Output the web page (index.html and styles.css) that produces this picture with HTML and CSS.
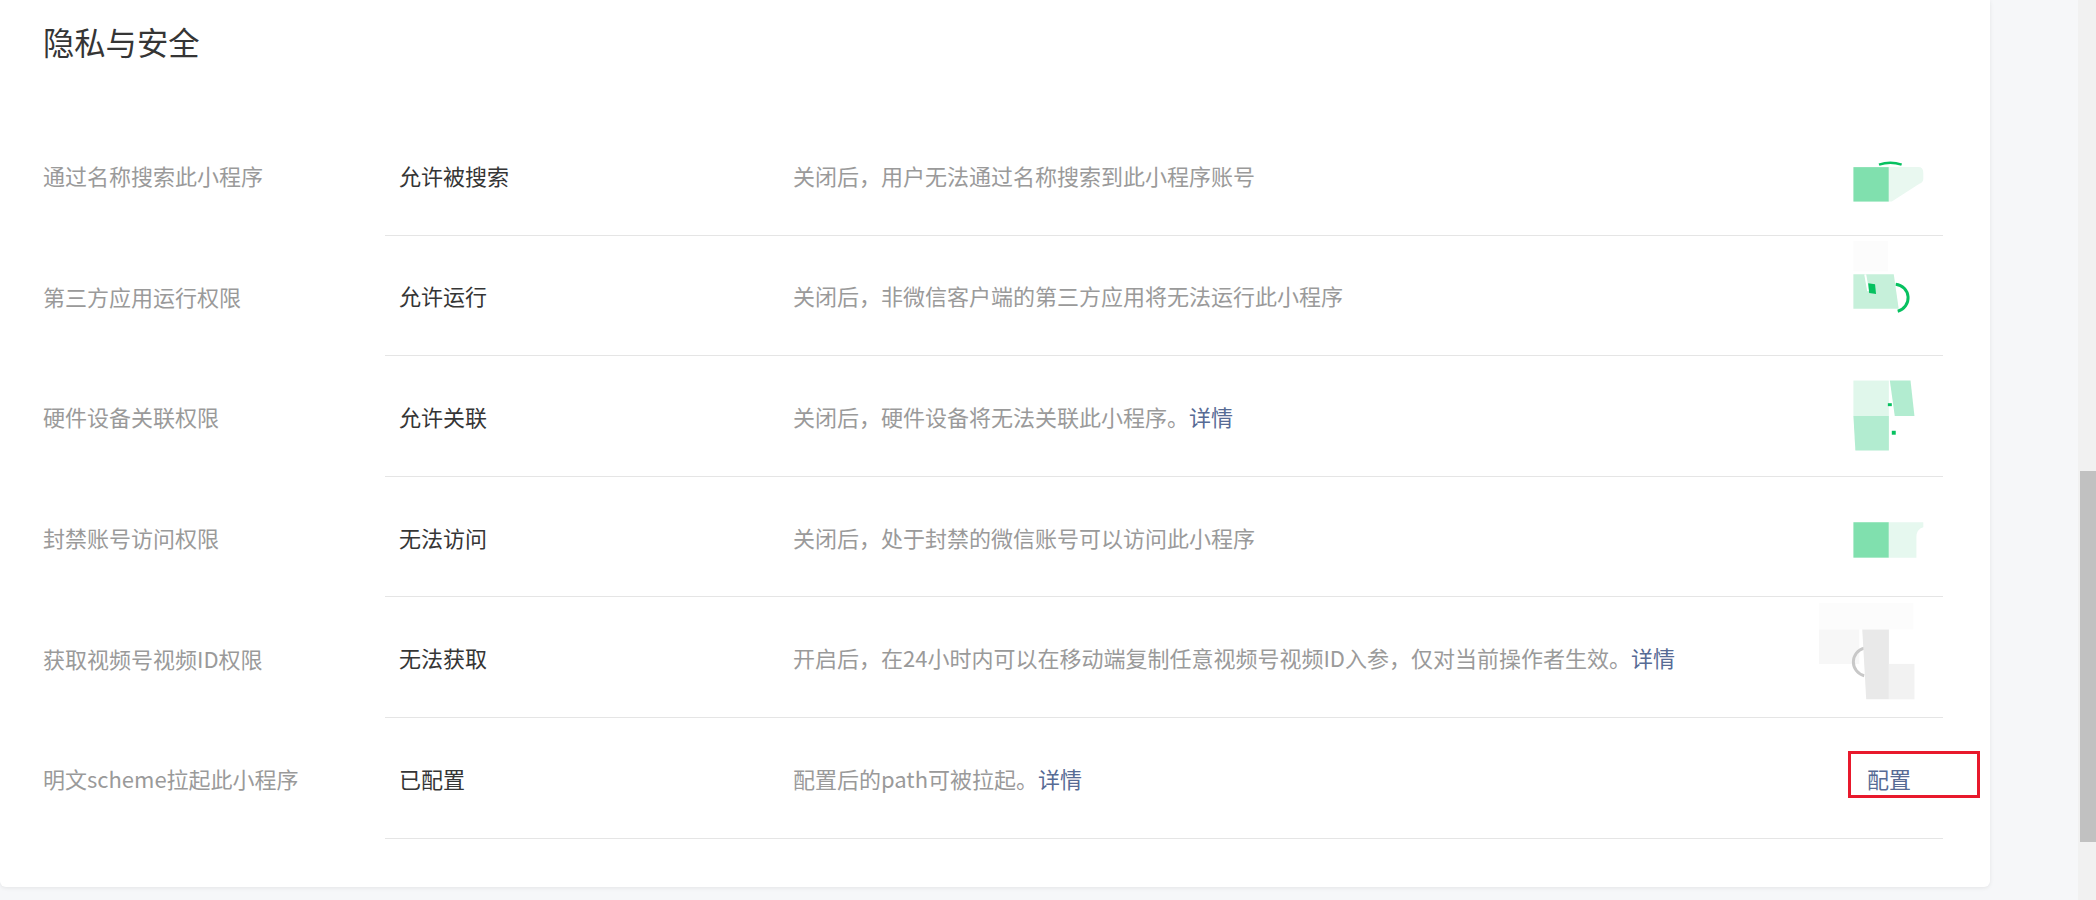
FILE: index.html
```html
<!DOCTYPE html>
<html lang="zh-CN">
  <head>
    <meta charset="UTF-8" />
    <meta name="viewport" content="width=device-width, initial-scale=1.0" />
    <title>隐私与安全</title>
    <link rel="stylesheet" href="styles.css">
  </head>
  <body>
    <div class="page">
      <div class="main">
        <div class="card">
          <h2 class="card-title">隐私与安全</h2>

          <div class="setting-list">
            <div class="row">
              <div class="row-label">通过名称搜索此小程序</div>
              <div class="row-body">
                <div class="row-value">允许被搜索</div>
                <div class="row-desc">关闭后，用户无法通过名称搜索到此小程序账号</div>
                <div class="row-action">
                  <svg class="switch" viewBox="0 0 130 110" width="130" height="110">
                    <path d="M65 44.5 Q76.5 40.5 88 44.5" fill="none" stroke="#07c160" stroke-width="2.5" />
                    <rect x="39" y="47" width="36" height="35" fill="#80e0ae" />
                    <path d="M75 47 L105 47 Q110 47 110 53 L110 59 Q110 62 106 64 L78 82 L75 82 Z" fill="#e9f8f0" />
                  </svg>
                </div>
              </div>
            </div>

            <div class="row">
              <div class="row-label">第三方应用运行权限</div>
              <div class="row-body">
                <div class="row-value">允许运行</div>
                <div class="row-desc">关闭后，非微信客户端的第三方应用将无法运行此小程序</div>
                <div class="row-action">
                  <svg class="switch" viewBox="0 0 130 110" width="130" height="110">
                    <rect x="39" y="0" width="35" height="31" fill="#fcfcfc" />
                    <polygon points="39,34 80,34 85,69 39,69" fill="#c6f0da" />
                    <line x1="51" y1="34" x2="54" y2="51" stroke="#fff" stroke-width="2" />
                    <polygon points="54,43 61,44 62,54 55,53" fill="#07c160" />
                    <path d="M82 44 A14 14 0 0 1 84 71.5" fill="none" stroke="#07c160" stroke-width="3" />
                  </svg>
                </div>
              </div>
            </div>

            <div class="row">
              <div class="row-label">硬件设备关联权限</div>
              <div class="row-body">
                <div class="row-value">允许关联</div>
                <div class="row-desc">关闭后，硬件设备将无法关联此小程序。<a class="link" href="#">详情</a></div>
                <div class="row-action">
                  <svg class="switch" viewBox="0 0 130 110" width="130" height="110">
                    <rect x="39" y="19" width="36" height="36" fill="#e0f7eb" />
                    <polygon points="76,19 97,19 101,55 81,55" fill="#b2ecd0" />
                    <rect x="74" y="42" width="4" height="3" fill="#07c160" />
                    <polygon points="39,55 75,55 75,90 41,90" fill="#b2ecd0" />
                    <rect x="78" y="70" width="4" height="4" fill="#07c160" />
                  </svg>
                </div>
              </div>
            </div>

            <div class="row">
              <div class="row-label">封禁账号访问权限</div>
              <div class="row-body">
                <div class="row-value">无法访问</div>
                <div class="row-desc">关闭后，处于封禁的微信账号可以访问此小程序</div>
                <div class="row-action">
                  <svg class="switch" viewBox="0 0 130 110" width="130" height="110">
                    <rect x="39" y="40" width="36" height="36" fill="#80e0ae" />
                    <path d="M75 40 H110 V45 Q103 47 103 55 V76 H75 Z" fill="#e6f8ef" />
                  </svg>
                </div>
              </div>
            </div>

            <div class="row">
              <div class="row-label">获取视频号视频ID权限</div>
              <div class="row-body">
                <div class="row-value">无法获取</div>
                <div class="row-desc">开启后，在24小时内可以在移动端复制任意视频号视频ID入参，仅对当前操作者生效。<a class="link" href="#">详情</a></div>
                <div class="row-action">
                  <svg class="switch" viewBox="0 0 130 110" width="130" height="110">
                    <rect x="4" y="0" width="96" height="27" fill="#fcfcfc" />
                    <rect x="4" y="27" width="41" height="35" fill="#f7f7f7" />
                    <path d="M50 46 A14.4 14.4 0 0 0 50 74" fill="none" stroke="#c8c8c8" stroke-width="3" />
                    <polygon points="48,27 75,27 75,98 52,98" fill="#e9e9e9" />
                    <rect x="75" y="62" width="26" height="36" fill="#f2f2f2" />
                  </svg>
                </div>
              </div>
            </div>

            <div class="row">
              <div class="row-label">明文scheme拉起此小程序</div>
              <div class="row-body">
                <div class="row-value">已配置</div>
                <div class="row-desc">配置后的path可被拉起。<a class="link" href="#">详情</a></div>
                <div class="row-action">
                  <a class="link action-link marked" href="#">配置</a>
                </div>
              </div>
            </div>
          </div>
        </div>
      </div>

      <div class="scrollbar">
        <div class="scrollbar-thumb"></div>
      </div>
    </div>
  </body>
</html>
```

FILE: styles.css
```css
:root {
  --text: #353535;
  --text-weak: #9a9a9a;
  --link: #576b95;
  --line: #e5e5e5;
  --page-bg: #f6f7f9;
  --font: "Microsoft YaHei", "Noto Sans CJK SC", "Noto Sans", sans-serif;
}

* {
  box-sizing: border-box;
}

body {
  margin: 0;
  height: 900px;
  overflow: hidden;
  font-family: var(--font);
  background: var(--page-bg);
}

.page {
  display: flex;
  height: 900px;
}

.main {
  flex: 1;
  background: var(--page-bg);
}

.card {
  width: 1990px;
  height: 887px;
  padding: 22px 47px 0 43px;
  background: #fff;
  border-radius: 0 0 6px 6px;
  box-shadow: 0 1px 4px rgba(0, 0, 0, 0.08);
}

.card-title {
  margin: 0;
  font-size: 31.3px;
  line-height: 40px;
  font-weight: 400;
  color: var(--text);
}

.setting-list {
  margin-top: 53px;
}

.row {
  display: flex;
  height: 120.6px;
  font-size: 22px;
  line-height: 30px;
}

.row-label {
  width: 342px;
  flex-shrink: 0;
  display: flex;
  align-items: center;
  color: var(--text-weak);
}

.row-body {
  flex: 1;
  display: flex;
  align-items: center;
  padding-left: 14px;
  border-bottom: 1px solid var(--line);
}

.row-value {
  width: 394px;
  flex-shrink: 0;
  color: var(--text);
}

.row-desc {
  flex: 1;
  color: var(--text-weak);
}

.row-action {
  width: 128px;
  flex-shrink: 0;
  display: flex;
  align-items: center;
}

.switch {
  display: block;
}

.link {
  color: var(--link);
  text-decoration: none;
}

.action-link {
  margin-left: 52px;
}

/* 截图标注框 */
.marked {
  position: relative;
}
.marked::after {
  content: "";
  position: absolute;
  left: -19px;
  right: -69px;
  top: -12px;
  bottom: -5px;
  border: 3px solid #e8192c;
}

.scrollbar {
  width: 18px;
  flex-shrink: 0;
  background: #f1f1f1;
}

.scrollbar-thumb {
  margin: 471px 0 0 2px;
  height: 371px;
  background: #c1c1c1;
}
```
